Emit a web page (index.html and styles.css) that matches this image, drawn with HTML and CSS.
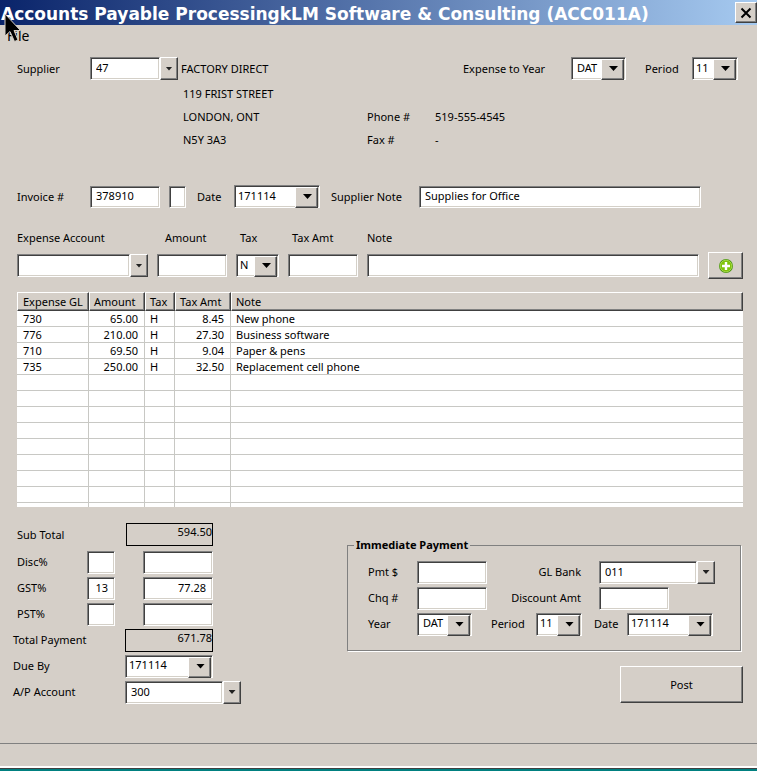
FILE: index.html
```html
<!DOCTYPE html>
<html lang="en">
<head>
<meta charset="utf-8">
<title>Accounts Payable Processing</title>
<link rel="stylesheet" href="styles.css">
</head>
<body>
<header class="titlebar">
  <h1>Accounts Payable ProcessingkLM Software &amp; Consulting (ACC011A)</h1>
  <button class="close" aria-label="Close"><svg width="12" height="12" viewBox="0 0 12 12"><path d="M1.5 1.5 10.5 10.5M10.5 1.5 1.5 10.5" stroke="#000" stroke-width="2"/></svg></button>
</header>
<nav class="menu"><button>File</button></nav>
<svg class="pointer" width="18" height="30" viewBox="0 0 18 30"><path d="M1 1V23L6 18.500 10.500 28.500 14 27 10 17.500H16.500Z" fill="#000" stroke="#d5cfc8"/></svg>

<main>
  <section class="line supplier">
    <label class="lead" for="supplier">Supplier</label>
    <span class="combo"><input id="supplier" class="amt" value="47"><button aria-label="Open supplier list"></button></span>
    <span class="company">FACTORY DIRECT</span>
    <span class="line period-group">
      <label class="year-label" for="year">Expense to Year</label>
      <span class="drop year"><select id="year"><option>DAT</option></select></span>
      <label class="period-label" for="period">Period</label>
      <span class="drop month"><select id="period"><option>11</option></select></span>
    </span>
  </section>
  <section class="address">
    <span>119 FRIST STREET</span><span></span><span></span>
    <span>LONDON, ONT</span><span>Phone #</span><span>519-555-4545</span>
    <span>N5Y 3A3</span><span>Fax #</span><span>-</span>
  </section>

  <section class="line invoice">
    <label class="lead" for="invoice">Invoice #</label>
    <input id="invoice" class="amt" value="378910">
    <input class="flag" aria-label="Invoice suffix">
    <label class="date-label" for="date">Date</label>
    <span class="drop date"><select id="date"><option>171114</option></select></span>
    <label class="note-label" for="snote">Supplier Note</label>
    <input id="snote" class="grow" value="Supplies for Office">
  </section>

  <section class="entry">
    <label for="account">Expense Account</label>
    <label class="indent" for="amount">Amount</label>
    <label class="nudge" for="tax">Tax</label>
    <label class="nudge" for="taxamt">Tax Amt</label>
    <label for="note">Note</label>
    <span></span>
    <span class="combo"><input id="account" class="grow"><button aria-label="Open account list"></button></span>
    <input id="amount">
    <span class="drop tax"><select id="tax"><option>N</option></select></span>
    <input id="taxamt">
    <input id="note">
    <button class="add" aria-label="Add line"><svg width="16" height="16" viewBox="0 0 16 16"><circle cx="8" cy="8" r="7" fill="#4f9a14"/><circle cx="8" cy="8" r="5.800" fill="#7fc40a" stroke="#b4df55" stroke-width=".8"/><path d="M8 4V12M4 8H12" stroke="#fff" stroke-width="2.400"/></svg></button>
  </section>

  <div class="grid">
    <table>
      <colgroup><col class="c-gl"><col class="c-amt"><col class="c-tax"><col class="c-amt"><col></colgroup>
      <thead><tr><th>Expense GL</th><th>Amount</th><th>Tax</th><th>Tax Amt</th><th>Note</th></tr></thead>
      <tbody>
        <tr><td>730</td><td class="num">65.00</td><td>H</td><td class="num">8.45</td><td>New phone</td></tr>
        <tr><td>776</td><td class="num">210.00</td><td>H</td><td class="num">27.30</td><td>Business software</td></tr>
        <tr><td>710</td><td class="num">69.50</td><td>H</td><td class="num">9.04</td><td>Paper &amp; pens</td></tr>
        <tr><td>735</td><td class="num">250.00</td><td>H</td><td class="num">32.50</td><td>Replacement cell phone</td></tr>
        <tr><td></td><td></td><td></td><td></td><td></td></tr>
        <tr><td></td><td></td><td></td><td></td><td></td></tr>
        <tr><td></td><td></td><td></td><td></td><td></td></tr>
        <tr><td></td><td></td><td></td><td></td><td></td></tr>
        <tr><td></td><td></td><td></td><td></td><td></td></tr>
        <tr><td></td><td></td><td></td><td></td><td></td></tr>
        <tr><td></td><td></td><td></td><td></td><td></td></tr>
        <tr><td></td><td></td><td></td><td></td><td></td></tr>
        <tr><td></td><td></td><td></td><td></td><td></td></tr>
      </tbody>
    </table>
  </div>

  <div class="bottom">
    <section class="totals">
      <div class="taxes">
        <span>Sub Total</span><output class="wide">594.50</output>
        <label for="disc">Disc%</label><input id="disc"><input class="sum" aria-label="Discount amount">
        <label for="gst">GST%</label><input id="gst" class="num" value="13"><input class="sum num" aria-label="GST amount" value="77.28">
        <label for="pst">PST%</label><input id="pst"><input class="sum" aria-label="PST amount">
      </div>
      <div class="due">
        <span>Total Payment</span><output>671.78</output>
        <label for="dueby">Due By</label><span class="drop"><select id="dueby"><option>171114</option></select></span>
        <label for="ap">A/P Account</label><span class="combo bank"><input id="ap" class="grow" value="300"><button aria-label="Open A/P account list"></button></span>
      </div>
    </section>
    <section class="payment">
      <fieldset>
        <legend>Immediate Payment</legend>
        <div class="line">
          <label class="pay-lead" for="pmt">Pmt $</label><input id="pmt" class="amt">
          <label class="pay-mid" for="bank">GL Bank</label>
          <span class="combo bank"><input id="bank" class="grow" value="011"><button aria-label="Open bank list"></button></span>
        </div>
        <div class="line">
          <label class="pay-lead" for="chq">Chq #</label><input id="chq" class="amt">
          <label class="pay-mid" for="discamt">Discount Amt</label><input id="discamt" class="amt">
        </div>
        <div class="line">
          <label class="pay-lead" for="pyear">Year</label><span class="drop year"><select id="pyear"><option>DAT</option></select></span>
          <label class="pay-period" for="pperiod">Period</label><span class="drop month"><select id="pperiod"><option>11</option></select></span>
          <label class="pay-date" for="pdate">Date</label><span class="drop date"><select id="pdate"><option>171114</option></select></span>
        </div>
      </fieldset>
      <button class="post">Post</button>
    </section>
  </div>
</main>
<footer class="status"></footer>
</body>
</html>
```

FILE: styles.css
```css
* { box-sizing: border-box; }

:root {
  --face: #d5cfc8;
  --text: 11px;
}

body {
  margin: 0;
  min-height: 100vh;
  display: flex;
  flex-direction: column;
  background: var(--face);
  color: #000;
  font: var(--text)/16px "Noto Sans", "Open Sans", sans-serif;
}

button, input, select {
  font: inherit;
  color: inherit;
  margin: 0;
  border-radius: 0;
}

label, span { white-space: nowrap; }

.titlebar {
  display: flex;
  align-items: center;
  justify-content: space-between;
  height: 25px;
  background: linear-gradient(90deg, #0a246a, #a6caf0);
}

.titlebar h1 {
  margin: 0 0 0 1px;
  padding-top: 2px;
  color: #fff;
  font: bold 17px/24px "DejaVu Sans", sans-serif;
  white-space: nowrap;
}

button {
  background: var(--face);
  border: 1px solid;
  border-color: #fff #404040 #404040 #fff;
  box-shadow: inset -1px -1px #808080;
  padding: 0;
}

.close {
  display: grid;
  place-items: center;
  width: 22px;
  height: 21px;
}

.menu { height: 32px; padding: 1px 7px; }

.menu button {
  border: 0;
  box-shadow: none;
  font-size: 14px;
  line-height: 20px;
}

.pointer { position: absolute; left: 4px; top: 13px; }

main { flex: 1; padding: 0 14px 0 17px; }

.line { display: flex; align-items: center; }

input, .drop {
  min-width: 0;
  height: 23px;
  background: #fff;
  border: 1px solid;
  border-color: #808080 #fff #fff #808080;
  box-shadow: inset 1px 1px #404040, inset -1px -1px #d4d0c8;
}

input { padding: 0 6px 2px 5px; }

.lead { width: 73px; }
.amt { width: 70px; }
.grow { flex: 1; width: 0; }
.num { text-align: right; }

.combo { display: flex; }
.combo button { flex: none; width: 18px; height: 23px; }

.combo button::before, .drop::before {
  content: "";
  display: block;
  width: 7px;
  height: 4px;
  margin: auto;
  background: #222;
  clip-path: polygon(0 0, 100% 0, 50% 100%);
}

.drop { position: relative; display: block; }

.drop select {
  appearance: none;
  display: block;
  width: 100%;
  height: 20px;
  padding: 0 20px 1px 3px;
  border: 0;
  background: none;
}

.drop::after {
  content: "";
  position: absolute;
  top: 1px;
  right: 1px;
  width: 21px;
  height: 19px;
  background: var(--face);
  border: 1px solid;
  border-color: #fff #404040 #404040 #fff;
  box-shadow: inset -1px -1px #808080;
  pointer-events: none;
}

.drop::before {
  position: absolute;
  z-index: 1;
  top: 8px;
  right: 7px;
  width: 9px;
  height: 5px;
  background: #000;
  pointer-events: none;
}

.year { width: 55px; }
.year select { padding-left: 5px; }
.month { width: 46px; }
.date { width: 86px; }
.company { padding-left: 3px; }

.period-group { margin-left: auto; padding-right: 5px; }
.year-label { width: 108px; }
.period-label { width: 66px; padding-left: 19px; }

.address {
  display: grid;
  grid-template-columns: 184px 68px 1fr;
  grid-auto-rows: 23px;
  align-items: center;
  padding: 2px 0 0 166px;
}

.invoice { margin-top: 34px; padding-right: 42px; }
.invoice input { height: 22px; }
.flag { width: 17px; margin-left: 9px; }
.date-label { width: 48px; padding-left: 11px; }
.note-label { width: 99px; padding-left: 11px; }

.entry {
  display: grid;
  grid-template-columns: 131px 70px 43px 70px 1fr 35px;
  grid-template-rows: 20px 27px;
  align-items: center;
  gap: 4px 9px;
  margin-top: 20px;
}

.indent { padding-left: 8px; }
.nudge { padding-left: 4px; }
.add { display: grid; place-items: center; height: 27px; }

.grid {
  height: 215px;
  margin-top: 13px;
  overflow: hidden;
  background: #fff;
}

table {
  width: 100%;
  table-layout: fixed;
  border-collapse: separate;
  border-spacing: 0;
}

.c-gl { width: 72px; }
.c-amt { width: 56px; }
.c-tax { width: 30px; }

th {
  height: 19px;
  padding: 0 0 0 5px;
  background: var(--face);
  border: 1px solid;
  border-color: #fff #404040 #404040 #fff;
  box-shadow: inset -1px -1px #808080;
  font-weight: normal;
  text-align: left;
  line-height: 16px;
  white-space: nowrap;
}

th + th { padding-left: 4px; }

td {
  height: 16px;
  padding: 0 6px;
  border-right: 1px solid #c8c8c4;
  border-bottom: 1px solid #c8c8c4;
  line-height: 15px;
  white-space: nowrap;
}

td + td { padding-left: 5px; }
td:last-child { border-right: 0; }

.bottom { display: flex; justify-content: space-between; padding-top: 13px; }

.taxes {
  display: grid;
  grid-template-columns: 70px 28px 28px 70px;
  grid-template-rows: 29px;
  grid-auto-rows: 26px;
  align-items: center;
}

.sum { grid-column: 4; }
.taxes input { height: 23px; }

output {
  height: 23px;
  border: 1px solid #000;
  text-align: right;
}

.wide { grid-column: 3 / 5; justify-self: end; width: 87px; }

.due {
  display: grid;
  grid-template-columns: 112px 88px;
  grid-auto-rows: 26px;
  align-items: center;
  margin-left: -4px;
}

.bank { width: 116px; }

.payment { display: flex; flex-direction: column; padding: 17px 2px 0 0; }

fieldset {
  margin: 0;
  padding: 6px 25px 13px 20px;
  border: 1px solid #808080;
  box-shadow: 1px 1px #fff;
}

fieldset .line { height: 26px; }
legend { margin-left: -14px; padding: 0 2px; font-weight: bold; }
.pay-lead { width: 49px; }
.pay-mid { width: 112px; padding-right: 18px; text-align: right; }
.pay-period { width: 64px; padding-left: 19px; }
.pay-date { width: 45px; padding-left: 12px; }

.post {
  align-self: flex-end;
  width: 123px;
  height: 37px;
  margin: 15px -2px 0 0;
}

.status {
  height: 28px;
  border-top: 1px solid #808080;
  border-bottom: 2px solid #008080;
  box-shadow: inset 0 -1px #404040, inset 0 -3px #fff;
}
```
